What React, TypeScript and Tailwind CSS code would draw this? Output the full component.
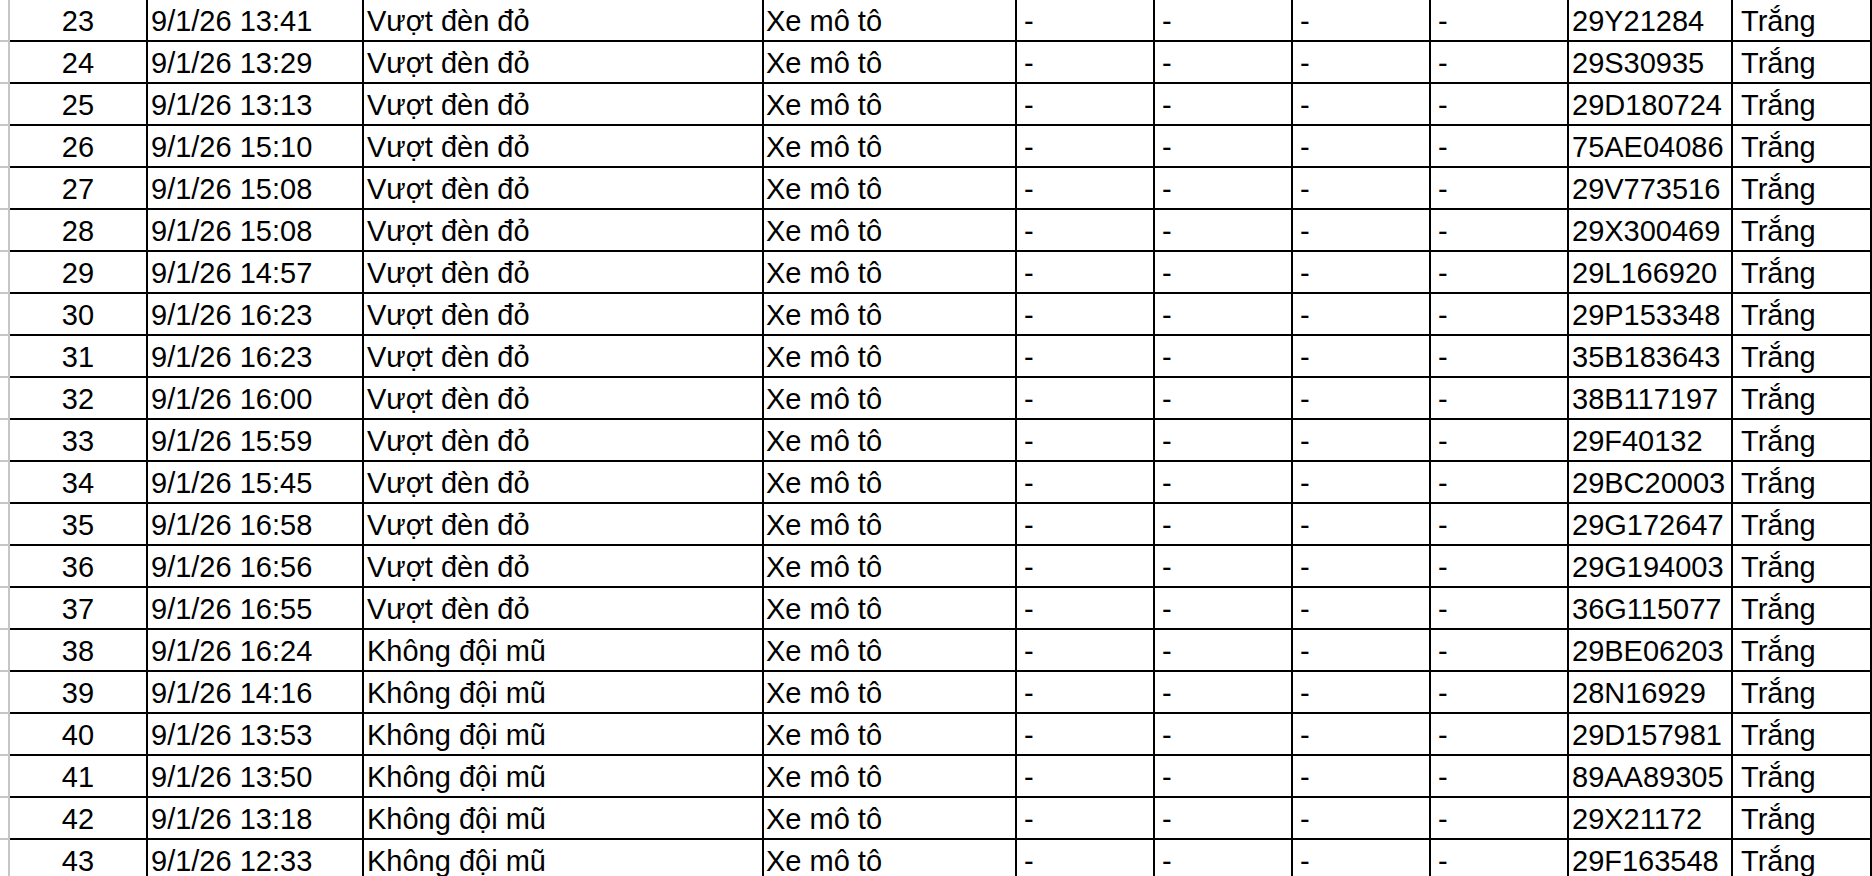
const rows: [number, string, string, string][] = [
	[23, "9/1/26 13:41", "Vượt đèn đỏ", "29Y21284"],
	[24, "9/1/26 13:29", "Vượt đèn đỏ", "29S30935"],
	[25, "9/1/26 13:13", "Vượt đèn đỏ", "29D180724"],
	[26, "9/1/26 15:10", "Vượt đèn đỏ", "75AE04086"],
	[27, "9/1/26 15:08", "Vượt đèn đỏ", "29V773516"],
	[28, "9/1/26 15:08", "Vượt đèn đỏ", "29X300469"],
	[29, "9/1/26 14:57", "Vượt đèn đỏ", "29L166920"],
	[30, "9/1/26 16:23", "Vượt đèn đỏ", "29P153348"],
	[31, "9/1/26 16:23", "Vượt đèn đỏ", "35B183643"],
	[32, "9/1/26 16:00", "Vượt đèn đỏ", "38B117197"],
	[33, "9/1/26 15:59", "Vượt đèn đỏ", "29F40132"],
	[34, "9/1/26 15:45", "Vượt đèn đỏ", "29BC20003"],
	[35, "9/1/26 16:58", "Vượt đèn đỏ", "29G172647"],
	[36, "9/1/26 16:56", "Vượt đèn đỏ", "29G194003"],
	[37, "9/1/26 16:55", "Vượt đèn đỏ", "36G115077"],
	[38, "9/1/26 16:24", "Không đội mũ", "29BE06203"],
	[39, "9/1/26 14:16", "Không đội mũ", "28N16929"],
	[40, "9/1/26 13:53", "Không đội mũ", "29D157981"],
	[41, "9/1/26 13:50", "Không đội mũ", "89AA89305"],
	[42, "9/1/26 13:18", "Không đội mũ", "29X21172"],
	[43, "9/1/26 12:33", "Không đội mũ", "29F163548"],
];

const cell = "h-full border-r-2 border-black leading-[42px] whitespace-nowrap overflow-visible";

export default function App() {
	return (
		<div className="w-[1872px] bg-white text-black text-[29px] font-['Liberation_Sans',Arial,sans-serif]">
			{rows.map(([n, time, kind, plate]) => (
				<div key={n} className="flex h-[42px]">
					{/* spreadsheet row header edge */}
					<div className="w-[10px] h-full border-r-2 border-b-2 border-[#c6c6c6]" />
					<div className="flex flex-1 h-full border-b-2 border-black">
						<div className={`${cell} w-[138px] text-center`}>{n}</div>
						<div className={`${cell} w-[216px] pl-[3px]`}>{time}</div>
						<div className={`${cell} w-[400px] pl-[3px]`}>{kind}</div>
						<div className={`${cell} w-[253px] pl-[2px]`}>Xe mô tô</div>
						<div className={`${cell} w-[138px] pl-[7px]`}>-</div>
						<div className={`${cell} w-[138px] pl-[7px]`}>-</div>
						<div className={`${cell} w-[138px] pl-[7px]`}>-</div>
						<div className={`${cell} w-[138px] pl-[7px]`}>-</div>
						<div className={`${cell} w-[164px] pl-[3px]`}>{plate}</div>
						<div className={`${cell} w-[139px] pl-[8px]`}>Trắng</div>
					</div>
				</div>
			))}
		</div>
	);
}
